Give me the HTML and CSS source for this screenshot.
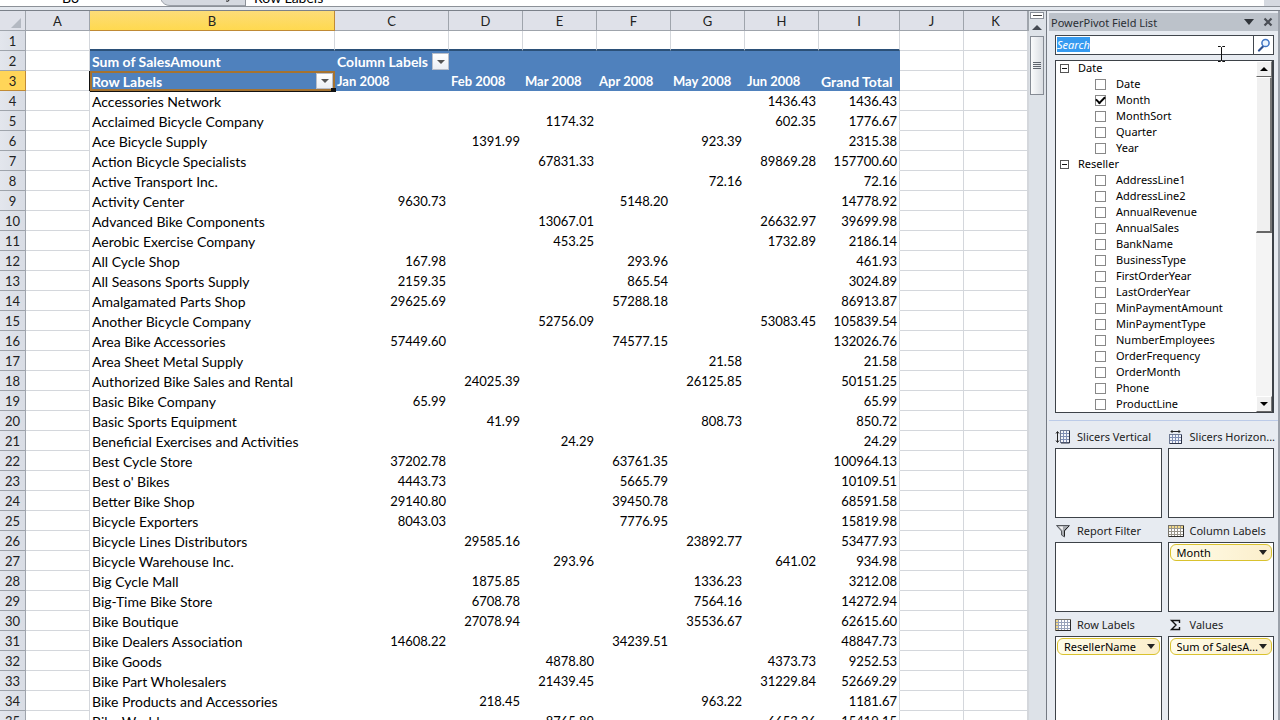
FILE: index.html
```html
<!DOCTYPE html>
<html lang="en">
<head>
  <meta charset="UTF-8">
  <meta name="viewport" content="width=device-width, initial-scale=1.0">
  <title>PowerPivot - Sales by Reseller</title>
  <link rel="stylesheet" href="styles.css">
</head>
<body>
<div class="formula-bar">
  <div class="name-box"><span>B3</span></div>
  <div class="fx"><svg width="84" height="6" viewBox="0 0 84 6"><path d="M0 0Q3 5.500 9 5.500H84V0Z" fill="#d5d9e0"/><path d="M0 0Q3 5.500 9 5.500H84" fill="none" stroke="#9a9fa7"/><path d="M68 0q0 2-3 1" fill="none" stroke="#222"/></svg></div>
  <div class="formula"><span>Row Labels</span></div>
  <div class="formula-end"></div>
</div>

<div class="workspace">
  <main class="sheet">
    <table class="grid">
      <colgroup>
        <col class="c-num"><col class="c-std"><col class="c-b"><col class="c-c">
        <col class="c-month"><col class="c-month"><col class="c-month"><col class="c-month"><col class="c-month">
        <col class="c-total"><col class="c-std"><col class="c-std"><col>
      </colgroup>
      <thead>
        <tr>
          <th class="corner"><svg width="12" height="12" viewBox="0 0 12 12"><path d="M11 1v10H1z" fill="#b4b9c2"/></svg></th>
          <th>A</th><th class="active">B</th><th>C</th><th>D</th><th>E</th><th>F</th><th>G</th><th>H</th><th>I</th><th>J</th><th>K</th><th></th>
        </tr>
      </thead>
      <tbody id="rows">
        <tr class="blank-row"><th>1</th><td></td><td></td><td></td><td></td><td></td><td></td><td></td><td></td><td></td><td></td><td></td><td></td></tr>
        <tr class="pivot-head">
          <th>2</th><td></td>
          <td class="p wide">Sum of SalesAmount</td>
          <td class="p wide"><div class="cell-filter"><span>Column Labels</span><button class="drop" aria-label="Filter column labels"></button></div></td>
          <td class="p"></td><td class="p"></td><td class="p"></td><td class="p"></td><td class="p"></td><td class="p"></td>
          <td></td><td></td><td></td>
        </tr>
        <tr class="pivot-head">
          <th class="active">3</th><td></td>
          <td class="p wide selected"><div class="cell-filter"><span>Row Labels</span><button class="drop" aria-label="Filter row labels"></button></div></td>
          <td class="p">Jan 2008</td><td class="p">Feb 2008</td><td class="p">Mar 2008</td><td class="p">Apr 2008</td><td class="p">May 2008</td><td class="p">Jun 2008</td><td class="p wide">Grand Total</td>
          <td></td><td></td><td></td>
        </tr>
      </tbody>
    </table>
  </main>

  <div class="sheet-scroll">
    <div class="split"></div>
    <div class="arrow-up"></div>
    <div class="thumb"><i></i><i></i><i></i><i></i></div>
  </div>

  <aside class="panel">
    <header class="panel-title">
      <h2>PowerPivot Field List</h2>
      <button aria-label="Options"><svg width="10" height="6" viewBox="0 0 10 6"><path d="M0 0h10L5 6z" fill="#30343a"/></svg></button>
      <button aria-label="Close"><svg width="10" height="10" viewBox="0 0 10 10"><path d="M1.500 1.500l7 7M8.500 1.500l-7 7" stroke="#4a4e55" stroke-width="2.200"/></svg></button>
    </header>

    <div class="panel-body">
      <div class="search">
        <input type="text" id="search" value="Search" aria-label="Search" autocomplete="off" spellcheck="false">
        <button aria-label="Find">
          <svg width="14" height="14" viewBox="0 0 14 14"><path d="M6 8.500L2 12.500" stroke="#2d4f8f" stroke-width="2.200" stroke-linecap="round"/><circle cx="8.500" cy="5" r="3.600" fill="#eaf4ff" stroke="#3f74c4" stroke-width="1.500"/></svg>
        </button>
        <svg class="ibeam" width="9" height="18" viewBox="0 0 9 18"><path d="M1 1.500h2.500l1 1 1-1H8M4.500 2.500v13M1 16.500h2.500l1-1 1 1H8" fill="none" stroke="#111"/></svg>
      </div>

      <div class="field-list">
        <div class="fields" id="fields"></div>
        <div class="list-scroll">
          <button class="up" aria-label="Scroll up"></button>
          <div class="list-thumb"></div>
          <div class="list-track"></div>
          <button class="down" aria-label="Scroll down"></button>
        </div>
      </div>
    </div>

    <div class="areas">
      <section class="area">
        <h3>
          <svg width="16" height="14" viewBox="0 0 16 14"><path d="M2.500 2v10M1 3.500l1.500-2L4 3.500M1 10.500l1.500 2L4 10.500" fill="none" stroke="#222"/><rect x="5.500" y=".5" width="9" height="12" fill="#f3f5fa" stroke="#6e7a94"/><path d="M6 3.500h8M6 6.500h8M6 9.500h8M8.500 1v11M11.500 1v11" stroke="#7f8fb5"/><path d="M14.500 1v12H6" fill="none" stroke="#2c3245"/></svg>
          <span>Slicers Vertical</span>
        </h3>
        <div class="zone"></div>
      </section>
      <section class="area">
        <h3>
          <svg width="16" height="14" viewBox="0 0 16 14"><path d="M3 1.500h9M4.500 0L3 1.500 4.500 3M10.500 0L12 1.500 10.500 3" fill="none" stroke="#222"/><rect x="1.500" y="4.500" width="12" height="9" fill="#f3f5fa" stroke="#6e7a94"/><path d="M2 7.500h11M2 10.500h11M4.500 5v8M7.500 5v8M10.500 5v8" stroke="#7f8fb5"/><path d="M13.500 5v8.500H2" fill="none" stroke="#2c3245"/></svg>
          <span>Slicers Horizon...</span>
        </h3>
        <div class="zone"></div>
      </section>
      <section class="area">
        <h3>
          <svg width="16" height="14" viewBox="0 0 16 14"><path d="M1.500 1.500h13L9.500 7v6l-3-2V7z" fill="#a5a8ad" stroke="#55585d"/><path d="M4 2.500h4L7.500 10V6.500z" fill="#f5f5f5"/><path d="M14 2L9.500 6.500V12" fill="none" stroke="#222"/></svg>
          <span>Report Filter</span>
        </h3>
        <div class="zone"></div>
      </section>
      <section class="area">
        <h3>
          <svg width="16" height="14" viewBox="0 0 16 14"><rect x=".5" y="1.500" width="15" height="11" fill="#fff" stroke="#77736a"/><rect x="1" y="2" width="14" height="3" fill="#f2d98a"/><path d="M1 4.500h14M1 7.500h14M1 10.500h14M3.500 2v10M6.500 2v10M9.500 2v10M12.500 2v10" stroke="#98958c"/><path d="M15.500 2v10.500H1" fill="none" stroke="#2b2b2b"/></svg>
          <span>Column Labels</span>
        </h3>
        <div class="zone"><button class="pill"><span>Month</span><i></i></button></div>
      </section>
      <section class="area">
        <h3>
          <svg width="16" height="14" viewBox="0 0 16 14"><rect x=".5" y="1.500" width="15" height="11" fill="#fff" stroke="#77736a"/><rect x="1" y="2" width="3" height="10" fill="#f2d98a"/><path d="M1 4.500h14M1 7.500h14M1 10.500h14M3.500 2v10M6.500 2v10M9.500 2v10M12.500 2v10" stroke="#98a2ba"/><path d="M15.500 2v10.500H1" fill="none" stroke="#2b2b2b"/></svg>
          <span>Row Labels</span>
        </h3>
        <div class="zone"><button class="pill"><span>ResellerName</span><i></i></button></div>
      </section>
      <section class="area">
        <h3>
          <svg width="16" height="14" viewBox="0 0 16 14"><path d="M11.500 5V2.500H3.500L8 7l-4.500 4.500h8V9" fill="none" stroke="#111" stroke-width="1.400"/></svg>
          <span>Values</span>
        </h3>
        <div class="zone"><button class="pill"><span>Sum of SalesAmount</span><i></i></button></div>
      </section>
    </div>
  </aside>
</div>

<script src="script.js"></script>
</body>
</html>
```

FILE: styles.css
```css
* {
  margin: 0;
  padding: 0;
  box-sizing: border-box;
}

body {
  height: 100vh;
  overflow: hidden;
  display: flex;
  flex-direction: column;
  background: #e6eaf0;
  color: #000;
  font-family: Lato, "Open Sans", sans-serif;
  font-size: 13px;
}

button {
  border: none;
  background: none;
  font: inherit;
  color: inherit;
}

/* Formula bar */
.formula-bar {
  flex: none;
  display: flex;
  height: 11px;
  background: #e4e8ee;
  border-bottom: 1px solid #7b818a;
}

.formula-bar > div {
  height: 7px;
  background: #fff;
  border-bottom: 1px solid #8c9198;
  display: flex;
  align-items: flex-end;
  overflow: hidden;
}

.formula-bar span {
  font-size: 14px;
  line-height: 16px;
}

.name-box {
  width: 161px;
  justify-content: center;
  padding-right: 20px;
}

.fx {
  width: 84px;
}

.formula {
  flex: 1;
  border-left: 1px solid #8c9198;
  padding-left: 8px;
}

.formula-bar .formula-end {
  width: 16px;
  background: #d5d9e0;
}

/* Sheet */
.workspace {
  flex: 1;
  min-height: 0;
  display: flex;
}

.sheet {
  flex: 1;
  min-width: 0;
  overflow: hidden;
  background: #fff;
}

.grid {
  width: 100%;
  border-collapse: separate;
  border-spacing: 0;
  table-layout: fixed;
}

.c-num { width: 26px; }
.c-std { width: 64px; }
.c-b { width: 245px; }
.c-c { width: 114px; }
.c-month { width: 74px; }
.c-total { width: 81px; }

.grid th,
.grid td {
  height: 20px;
  padding-top: 2px;
  line-height: 17px;
  border-right: 1px solid #d4d7dc;
  border-bottom: 1px solid #d4d7dc;
  white-space: nowrap;
}

.grid th {
  background: #dfe1e9;
  border-color: #9fa4ac;
  font-weight: 400;
  color: #222;
}

.grid tbody th {
  background: linear-gradient(90deg, #e3e6ed, #d8dce4);
}

.grid thead th.active {
  background: linear-gradient(#fcdc78, #ffd94f);
  border-color: #c08a35;
}

.grid tbody th.active {
  background: #ffd558;
  border-color: #c08a35;
}

.corner svg {
  display: block;
  margin: 2px 0 0 10px;
}

.blank-row td:nth-child(n+3):nth-child(-n+10) {
  border-bottom: 2px solid #2b5078;
}

.grid .p {
  background: #4f81bd;
  border-color: #4f81bd;
  color: #fff;
  font-weight: 700;
  padding-left: 2px;
}

.grid .wide {
  font-size: 14px;
}

.grid td.name {
  padding-left: 2px;
  border-color: #fff;
  font-size: 14px;
}

.grid td.num {
  padding-right: 2px;
  text-align: right;
  border-color: #fff;
}

.grid td.total {
  border-right-color: #d4d7dc;
}

.cell-filter {
  display: flex;
  align-items: center;
  gap: 4px;
  height: 17px;
}

.drop {
  width: 17px;
  height: 17px;
  flex: none;
  display: grid;
  place-items: center;
  background: linear-gradient(#fff, #eceff4);
  border: 1px solid #b8bec9;
}

.drop::before {
  content: "";
  border: 4px solid transparent;
  border-top-color: #555;
  border-bottom: none;
}

.selected {
  position: relative;
  box-shadow: 0 1px 0 #111, -1px 0 0 #111;
}

.grid .selected {
  border: 2px solid #a67330;
  padding: 0;
}

.selected .cell-filter {
  justify-content: space-between;
  height: 16px;
}

.selected .drop {
  height: 16px;
}

.selected::after {
  content: "";
  position: absolute;
  right: -3px;
  bottom: -3px;
  width: 5px;
  height: 4px;
  background: #111;
}

/* Sheet scrollbar */
.sheet-scroll {
  flex: none;
  width: 18px;
  padding: 1px 2px 0 1px;
  background: #dde2e8;
  border-right: 1px solid #747a83;
}

.split {
  height: 7px;
  background: #fff;
  border: 1px solid #8a9099;
  display: grid;
  place-items: center;
}

.split::before {
  content: "";
  width: 9px;
  height: 1px;
  background: #444;
}

.arrow-up {
  height: 17px;
  display: grid;
  place-items: center;
}

.arrow-up::before {
  content: "";
  border: 5px solid transparent;
  border-bottom-color: #444a52;
  border-top: none;
}

.thumb {
  height: 59px;
  display: flex;
  flex-direction: column;
  align-items: center;
  justify-content: center;
  gap: 1px;
  background: linear-gradient(90deg, #fafbfc, #d9dde2);
  border: 1px solid #858b94;
}

.thumb i {
  width: 8px;
  height: 1px;
  background: #5f656e;
}

/* Field list panel */
.panel {
  flex: none;
  width: 233px;
  display: flex;
  flex-direction: column;
  overflow: hidden;
  background: #e7ebf1;
  border-right: 2px solid #9ba1aa;
  padding: 2px 0 0 2px;
  font-family: "Noto Sans", "Open Sans", sans-serif;
  font-size: 11px;
}

.panel-title {
  flex: none;
  display: flex;
  align-items: center;
  gap: 9px;
  height: 18px;
  padding: 0 5px 0 2px;
  background: #bcc2ca;
}

.panel-title h2 {
  flex: 1;
  font-size: 11px;
  font-weight: 400;
  color: #2a2e34;
}

.panel-title button {
  display: flex;
}

.panel-body {
  flex: none;
  padding: 4px 4px 7px 6px;
  border-bottom: 1px solid #bccbe8;
}

.search {
  position: relative;
  display: flex;
  height: 20px;
  background: #fff;
  border: 1px solid #41464d;
}

.search input {
  flex: 1;
  min-width: 0;
  height: 16px;
  padding-left: 1px;
  border: none;
  outline: none;
  font: italic 11px "Noto Sans", sans-serif;
}

.search input::selection {
  background: rgba(51, 153, 240, 0.99);
  color: #fff;
}

.search button {
  width: 20px;
  display: grid;
  place-items: center;
  border-left: 1px solid #41464d;
}

.ibeam {
  position: absolute;
  right: 47px;
  top: 9px;
}

.field-list {
  display: flex;
  height: 353px;
  margin-top: 5px;
  background: #fff;
  border: 1px solid #3d4248;
  border-right-width: 2px;
  overflow: hidden;
}

.fields {
  flex: 1;
  min-width: 0;
  margin-top: -1px;
}

.group-name,
.field {
  display: flex;
  align-items: center;
  height: 16px;
  line-height: 16px;
}

.group-name {
  gap: 9px;
  padding-left: 4px;
}

.toggle {
  width: 9px;
  height: 9px;
  display: grid;
  place-items: center;
  border: 1px solid #555;
}

.toggle::before {
  content: "";
  width: 5px;
  height: 1px;
  background: #111;
}

.field {
  gap: 10px;
  padding-left: 39px;
}

.field input {
  appearance: none;
  width: 11px;
  height: 11px;
  border: 1px solid #888;
  background: #fff;
}

.field input:checked {
  display: grid;
  place-items: center;
}

.field input:checked::before {
  content: "";
  width: 7px;
  height: 4px;
  border-left: 2px solid #000;
  border-bottom: 2px solid #000;
  transform: rotate(-45deg);
  margin-bottom: 2px;
}

.list-scroll {
  width: 16px;
  display: flex;
  flex-direction: column;
}

.list-scroll button {
  height: 16px;
  flex: none;
  display: grid;
  place-items: center;
  background: #f0f0f0;
  border: 1px solid #fff;
  border-right-color: #777;
  border-bottom-color: #666;
}

.up::before,
.down::before {
  content: "";
  border: 4px solid transparent;
}

.up::before {
  border-bottom-color: #000;
  border-top: none;
}

.down::before {
  border-top-color: #000;
  border-bottom: none;
}

.list-thumb {
  height: 156px;
  background: #f0f0f0;
  border: 1px solid #fff;
  border-right: 2px solid #777;
  border-bottom: 2px solid #666;
}

.list-track {
  flex: 1;
  background: #f4f4f4;
}

/* Drop areas */
.areas {
  flex: 1;
  min-height: 0;
  display: grid;
  grid-template-columns: 1fr 1fr;
  grid-auto-rows: 94px;
  column-gap: 6px;
  padding: 6px 4px 0 6px;
}

.area {
  min-width: 0;
}

.area h3 {
  display: flex;
  align-items: center;
  gap: 6px;
  height: 21px;
  padding-bottom: 2px;
  font-size: 11px;
  font-weight: 400;
  color: #222;
}

.area h3 svg {
  flex: none;
}

.area h3 span {
  white-space: nowrap;
}

.pill span {
  overflow: hidden;
  text-overflow: ellipsis;
  white-space: nowrap;
}

.zone {
  height: 70px;
  padding: 1px;
  background: #fff;
  border: 1px solid #3d4248;
}

.area:nth-child(n+5) .zone {
  height: 120px;
}

.pill {
  width: 100%;
  height: 17px;
  display: flex;
  align-items: center;
  justify-content: space-between;
  padding: 0 4px 0 6px;
  background: linear-gradient(90deg, #fffce8, #fbeecb);
  border: 1px solid #d9c22e;
  border-radius: 6px;
}

.pill i {
  flex: none;
  border: 4px solid transparent;
  border-top: 5px solid #222;
  border-bottom: none;
}
```

FILE: script.js
```js
// name, Jan, Feb, Mar, Apr, May, Jun, Grand Total
const sales = `Accessories Network,,,,,,1436.43,1436.43
Acclaimed Bicycle Company,,,1174.32,,,602.35,1776.67
Ace Bicycle Supply,,1391.99,,,923.39,,2315.38
Action Bicycle Specialists,,,67831.33,,,89869.28,157700.60
Active Transport Inc.,,,,,72.16,,72.16
Activity Center,9630.73,,,5148.20,,,14778.92
Advanced Bike Components,,,13067.01,,,26632.97,39699.98
Aerobic Exercise Company,,,453.25,,,1732.89,2186.14
All Cycle Shop,167.98,,,293.96,,,461.93
All Seasons Sports Supply,2159.35,,,865.54,,,3024.89
Amalgamated Parts Shop,29625.69,,,57288.18,,,86913.87
Another Bicycle Company,,,52756.09,,,53083.45,105839.54
Area Bike Accessories,57449.60,,,74577.15,,,132026.76
Area Sheet Metal Supply,,,,,21.58,,21.58
Authorized Bike Sales and Rental,,24025.39,,,26125.85,,50151.25
Basic Bike Company,65.99,,,,,,65.99
Basic Sports Equipment,,41.99,,,808.73,,850.72
Beneficial Exercises and Activities,,,24.29,,,,24.29
Best Cycle Store,37202.78,,,63761.35,,,100964.13
Best o' Bikes,4443.73,,,5665.79,,,10109.51
Better Bike Shop,29140.80,,,39450.78,,,68591.58
Bicycle Exporters,8043.03,,,7776.95,,,15819.98
Bicycle Lines Distributors,,29585.16,,,23892.77,,53477.93
Bicycle Warehouse Inc.,,,293.96,,,641.02,934.98
Big Cycle Mall,,1875.85,,,1336.23,,3212.08
Big-Time Bike Store,,6708.78,,,7564.16,,14272.94
Bike Boutique,,27078.94,,,35536.67,,62615.60
Bike Dealers Association,14608.22,,,34239.51,,,48847.73
Bike Goods,,,4878.80,,,4373.73,9252.53
Bike Part Wholesalers,,,21439.45,,,31229.84,52669.29
Bike Products and Accessories,,218.45,,,963.22,,1181.67
Bike World,,,8765.89,,,6653.26,15419.15`;

const rows = document.getElementById('rows');
sales.split('\n').forEach((line, i) => {
  const [name, ...values] = line.split(',');
  const cells = values.map((v, n) => `<td class="num${n === 6 ? ' total' : ''}">${v}</td>`).join('');
  rows.insertAdjacentHTML('beforeend',
    `<tr><th>${i + 4}</th><td></td><td class="name">${name}</td>${cells}<td></td><td></td><td></td></tr>`);
});

const tables = {
  Date: ['Date', 'Month', 'MonthSort', 'Quarter', 'Year'],
  Reseller: ['AddressLine1', 'AddressLine2', 'AnnualRevenue', 'AnnualSales', 'BankName', 'BusinessType',
    'FirstOrderYear', 'LastOrderYear', 'MinPaymentAmount', 'MinPaymentType', 'NumberEmployees',
    'OrderFrequency', 'OrderMonth', 'Phone', 'ProductLine']
};

const fields = document.getElementById('fields');
Object.entries(tables).forEach(([table, names]) => {
  let html = `<div class="group-name"><button class="toggle" aria-label="Collapse ${table}"></button>${table}</div>`;
  names.forEach((name) => {
    html += `<label class="field"><input type="checkbox"${name === 'Month' ? ' checked' : ''}>${name}</label>`;
  });
  fields.insertAdjacentHTML('beforeend', html);
});

const search = document.getElementById('search');
search.focus();
search.select();
```
